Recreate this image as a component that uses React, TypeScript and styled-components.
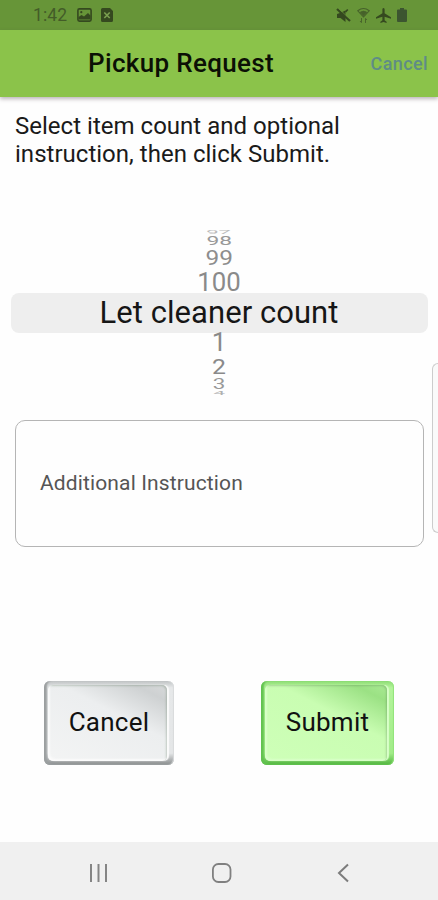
import React from "react";
import styled, { createGlobalStyle } from "styled-components";

const GlobalStyle = createGlobalStyle`
  * { box-sizing: border-box; }
  html, body { margin: 0; padding: 0; background: #fefefe; overflow: hidden; }
  body { font-family: Roboto, "Liberation Sans", sans-serif; color: #111; }
`;

const Screen = styled.div`
  width: 438px;
  height: 900px;
  display: flex;
  flex-direction: column;
  overflow: hidden;
  background: #fefefe;
`;

const StatusBar = styled.div`
  height: 30px;
  flex: none;
  display: flex;
  align-items: center;
  padding: 0 31px 0 33px;
  background: #679538;
  color: #35491f;
`;

const Clock = styled.span`
  width: 44px;
  font-size: 17.5px;
  line-height: 30px;
  letter-spacing: 0.1px;
  color: #435c28;
`;

const StatusGroup = styled.div<{ $gap: number; $push?: boolean }>`
  display: flex;
  align-items: center;
  gap: ${(p) => p.$gap}px;
  margin-left: ${(p) => (p.$push ? "auto" : "0")};
`;

const Header = styled.header`
  height: 67px;
  margin-bottom: 1px;
  flex: none;
  display: grid;
  grid-template-columns: 77px 1fr 77px;
  align-items: center;
  background: #8bc34a;
  box-shadow: 0 2px 4px rgba(70, 50, 65, 0.36);
`;

const Title = styled.h1`
  grid-column: 2;
  margin: 0;
  padding: 0 0 1px 11px;
  white-space: nowrap;
  font-size: 26px;
  line-height: 65px;
  font-weight: 500;
  color: #0b1005;
  letter-spacing: 0.34px;
`;

const HeaderAction = styled.button`
  border: 0;
  padding: 0 10px 0 0;
  background: none;
  font: 500 18px/66px Roboto, sans-serif;
  letter-spacing: 0.4px;
  color: #5f8c86;
  text-align: right;
`;

const Content = styled.main`
  flex: 1;
  display: flex;
  flex-direction: column;
`;

const Prompt = styled.p`
  margin: 14px 15px 0;
  height: 56px;
  font-size: 24px;
  line-height: 28px;
  letter-spacing: 0.02px;
  color: #1a1a1a;
`;

const Wheel = styled.div`
  margin: 62px 10px 0 11px;
  display: flex;
  flex-direction: column;
`;

const WheelRow = styled.div<{ $h: number; $drop: number }>`
  height: ${(p) => p.$h}px;
  display: flex;
  align-items: center;
  justify-content: center;
  padding: ${(p) => p.$drop}px 1px 0 0;
`;

const WheelValue = styled.span<{ $size: number; $stretch: number; $tone: string }>`
  flex: none;
  font-size: ${(p) => p.$size}px;
  line-height: 0.8;
  color: ${(p) => p.$tone};
  transform: scaleX(${(p) => p.$stretch});
`;

const Selected = styled.div`
  height: 40px;
  border-radius: 8px;
  background: #eeeeee;
  text-align: center;
  font-size: 31px;
  line-height: 39px;
  letter-spacing: 0.05px;
  padding-right: 1px;
  color: #161616;
`;

const InputRow = styled.div`
  height: 184px;
  margin-top: -33px;
  padding-left: 15px;
  display: flex;
  justify-content: space-between;
  align-items: flex-end;
`;

const Instruction = styled.div`
  width: 409px;
  height: 127px;
  border: 1.5px solid #b5b5b5;
  border-radius: 10px;
  padding: 0 24px 2px;
  display: flex;
  align-items: center;
  font-size: 21px;
  letter-spacing: 0.13px;
  color: #555;
`;

const EdgeHandle = styled.div`
  width: 6px;
  height: 170px;
  margin-bottom: 14px;
  border: 1px solid #ccc;
  border-right: 0;
  border-radius: 8px 0 0 8px;
  background: #fafafa;
`;

const Actions = styled.div`
  display: flex;
  justify-content: space-between;
  padding: 134px 44px 0 44px;
`;

type Tone = "grey" | "green";

const bevels = {
  grey: {
    frame: "linear-gradient(to bottom, #c0c3c4 0, #e6e8e9 8%, #e4e6e7 86%, #85898a 100%)",
    left: "#9b9fa0",
    right: "#d9dbdc",
    face: "linear-gradient(27deg, #f3f4f4 0%, #eceeef 60%, #ced1d2 88%, #d7d9da 100%)",
    rim: "#fbfbfb",
  },
  green: {
    frame: "linear-gradient(to bottom, #8edc75 0, #b3f49b 8%, #a2ec89 86%, #4fb33c 100%)",
    left: "#62c250",
    right: "#92e47b",
    face: "linear-gradient(27deg, #ceffb8 0%, #c9fdb2 60%, #9be184 88%, #a9ea93 100%)",
    rim: "#d9ffc9",
  },
};

const KeyButton = styled.button<{ $tone: Tone; $w: number }>`
  width: ${(p) => p.$w}px;
  height: 84px;
  padding: 4px 7px 4px 4px;
  border: 0;
  border-radius: 6px;
  background: ${(p) => bevels[p.$tone].frame};
  box-shadow:
    inset 3px -1px 2px ${(p) => bevels[p.$tone].left},
    inset -1px 0 1px ${(p) => bevels[p.$tone].right};
`;

const KeyFace = styled.span<{ $tone: Tone }>`
  height: 76px;
  display: flex;
  align-items: center;
  justify-content: center;
  border-radius: 5px;
  background: ${(p) => bevels[p.$tone].face};
  box-shadow:
    2px 0 1px ${(p) => bevels[p.$tone].rim},
    inset 2px -2px 2px ${(p) => bevels[p.$tone].rim},
    inset -1px 1px 2px rgba(60, 90, 60, 0.24);
  font: 400 26px/30px Roboto, sans-serif;
  letter-spacing: 0.25px;
  padding: 0 0 2px 3px;
  color: #111;
`;

const NavBar = styled.nav`
  height: 58px;
  flex: none;
  display: flex;
  justify-content: space-between;
  align-items: center;
  padding: 3px 88px 0 88px;
  background: #f0f0f0;
`;

const above = [
  { value: "97", h: 5, drop: 1, size: 4.6, stretch: 4.8, tone: "#bbb" },
  { value: "98", h: 11, drop: 1, size: 13, stretch: 1.75, tone: "#999" },
  { value: "99", h: 23, drop: 0, size: 20, stretch: 1.22, tone: "#8d8d8d" },
  { value: "100", h: 24, drop: 4, size: 25, stretch: 1.03, tone: "#8a8a8a" },
];

const below = [
  { value: "1", h: 18, drop: 2, size: 25, stretch: 1.05, tone: "#8a8a8a" },
  { value: "2", h: 30, drop: 2, size: 21, stretch: 1.18, tone: "#8a8a8a" },
  { value: "3", h: 8, drop: 0, size: 14, stretch: 1.6, tone: "#999" },
  { value: "4", h: 7, drop: 2, size: 4.6, stretch: 4.6, tone: "#b0b0b0" },
];

const rows = (list: typeof above) =>
  list.map((r) => (
    <WheelRow key={r.value} $h={r.h} $drop={r.drop}>
      <WheelValue $size={r.size} $stretch={r.stretch} $tone={r.tone}>{r.value}</WheelValue>
    </WheelRow>
  ));

const ImageIcon = () => (
  <svg width="15" height="14" viewBox="0 0 15 14">
    <rect x="0.9" y="0.9" width="13.2" height="12.2" rx="1.5" fill="none" stroke="currentColor" strokeWidth="1.6" />
    <path d="M1.5 11.5V9l3-2 2.5 1.5L11 5l2.500 2.500v4z" fill="currentColor" />
    <circle cx="4.3" cy="4.2" r="1.1" fill="currentColor" />
  </svg>
);

const FileErrorIcon = () => (
  <svg width="12" height="14" viewBox="0 0 12 14">
    <path d="M1.500 0H9l3 3v9.500a1.500 1.500 0 0 1-1.500 1.500h-9A1.500 1.500 0 0 1 0 12.500V1.500A1.500 1.500 0 0 1 1.500 0z" fill="currentColor" />
    <path d="M3.300 4.500l5.400 5.500M8.700 4.500l-5.400 5.500" stroke="#7ba050" strokeWidth="1.600" />
  </svg>
);

const MuteIcon = () => (
  <svg width="15" height="15" viewBox="0 0 15 15">
    <path d="M1 6l3-1L9.500 2.500V14L4.500 10H1z" fill="currentColor" />
    <path d="M1 1l13 12" stroke="currentColor" strokeWidth="2.200" />
    <path d="M3.200 1.200l10.500 9.500" stroke="#679538" strokeWidth="0.700" />
    <path d="M9.500 3.800l2.300-2.300" stroke="currentColor" strokeWidth="1.700" />
  </svg>
);

const WifiIcon = () => (
  <svg width="13" height="17" viewBox="0 0 13 17" fill="none" stroke="#46612a">
    <path d="M0.800 3.800Q6.500-0.800 12.200 3.800L6.500 10z" strokeWidth="1.100" />
    <path d="M3 5.300q3.500-2.600 7 0L6.500 9z" fill="#46612a" strokeWidth="0.500" />
    <path d="M4.500 11v4.500M3 14l1.500 1.700M8.500 16v-4.500M10 13l-1.500-1.700" strokeWidth="0.900" />
  </svg>
);

const PlaneIcon = () => (
  <svg width="15" height="15" viewBox="0 0 15 15">
    <path d="M7.500 0c.8 0 1.100.8 1.100 1.600v3.700L15 9.200v1.500L8.600 8.800v3.500l2 1.500V15l-3.100-.9L4.400 15v-1.200l2-1.500V8.800L0 10.700V9.200l6.400-3.900V1.600C6.400.8 6.700 0 7.500 0z" fill="currentColor" />
  </svg>
);

const BatteryIcon = () => (
  <svg width="10" height="14" viewBox="0 0 10 14">
    <path d="M3 0h4v1.500h2a1 1 0 0 1 1 1V13a1 1 0 0 1-1 1H1a1 1 0 0 1-1-1V2.500a1 1 0 0 1 1-1h2z" fill="#3c5530" />
  </svg>
);

export default function App() {
  return (
    <>
      <GlobalStyle />
      <Screen>
        <StatusBar>
          <Clock>1:42</Clock>
          <StatusGroup $gap={9}>
            <ImageIcon />
            <FileErrorIcon />
          </StatusGroup>
          <StatusGroup $gap={6} $push>
            <MuteIcon />
            <WifiIcon />
            <PlaneIcon />
            <BatteryIcon />
          </StatusGroup>
        </StatusBar>
        <Header>
          <Title>Pickup Request</Title>
          <HeaderAction>Cancel</HeaderAction>
        </Header>
        <Content>
          <Prompt>
            Select item count and optional
            <br />
            instruction, then click Submit.
          </Prompt>
          <Wheel>
            {rows(above)}
            <Selected>Let cleaner count</Selected>
            {rows(below)}
          </Wheel>
          <InputRow>
            <Instruction>Additional Instruction</Instruction>
            <EdgeHandle />
          </InputRow>
          <Actions>
            <KeyButton $tone="grey" $w={130}>
              <KeyFace $tone="grey">Cancel</KeyFace>
            </KeyButton>
            <KeyButton $tone="green" $w={133}>
              <KeyFace $tone="green">Submit</KeyFace>
            </KeyButton>
          </Actions>
        </Content>
        <NavBar>
          <svg width="20" height="20" viewBox="0 0 20 20" stroke="#858585" strokeWidth="2">
            <path d="M3 1v18M10.500 1v18M18 1v18" />
          </svg>
          <svg width="20" height="20" viewBox="0 0 20 20" fill="none" stroke="#808080" strokeWidth="1.800">
            <rect x="0.900" y="1" width="17.600" height="18" rx="5.500" />
          </svg>
          <svg width="15" height="20" viewBox="0 0 15 20" fill="none" stroke="#7c7c7c" strokeWidth="2">
            <path d="M13 1.500L4 10l9 8.500" />
          </svg>
        </NavBar>
      </Screen>
    </>
  );
}
